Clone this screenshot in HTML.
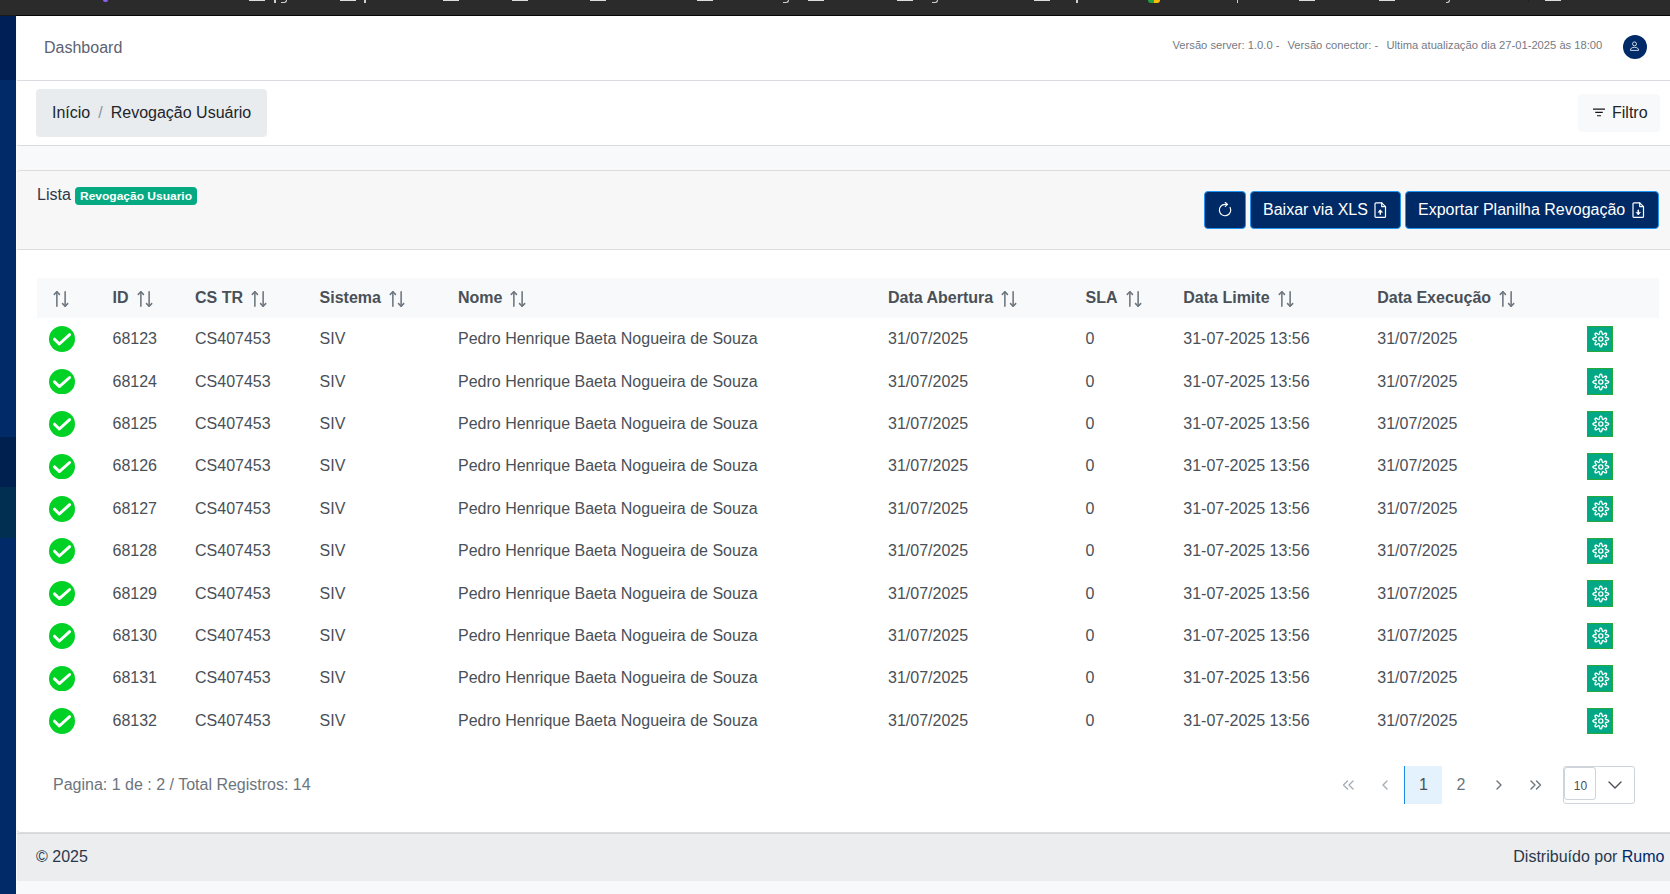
<!DOCTYPE html>
<html lang="pt-br">
<head>
<meta charset="utf-8">
<title>Revogação Usuário</title>
<style>
*{box-sizing:border-box;margin:0;padding:0}
html,body{width:1670px;height:894px;overflow:hidden}
body{position:relative;background:#f8f9fa;font-family:"Liberation Sans",sans-serif;font-size:16px;color:#495057}
.abs{position:absolute}
#topbar{left:0;top:0;width:1670px;height:16px;background:#2b2b2b;border-bottom:1px solid #060606}
#topbar i{position:absolute;top:0;height:1px;background:#dcdcdc;display:block}
#side{left:0;top:15px;width:16px;height:879px;background:#002a68;border-top:1px solid #1b1a18}
#side .s1{left:0;top:0;width:16px;height:64px;background:#001f57}
#side .s2{left:0;top:421px;width:16px;height:50px;background:#002050}
#side .s3{left:0;top:471px;width:16px;height:51px;background:#002f52}
#header{left:16px;top:16px;width:1654px;height:65px;background:#fff;border-bottom:1px solid #d8dbe0}
#dash{left:28px;top:23px;font-size:16px;line-height:18px;color:#5b6272}
#ver span{position:absolute;top:22.5px;font-size:11.2px;line-height:13px;color:#747a84;white-space:pre}
#avatar{left:1607px;top:19px;width:24px;height:24px;border-radius:50%;background:#002a68}
#sub{left:16px;top:81px;width:1654px;height:65px;background:#fff;border-bottom:1px solid #d8dbe0}
#crumb{left:20px;top:8px;width:231px;height:48px;background:#e9ecef;border-radius:4px;font-size:16px;line-height:47px;padding-left:16px;color:#212529;white-space:pre}
#crumb .sl{color:#8a93a2;padding:0 8px}
#filtro{left:1562px;top:13px;width:82px;height:38px;background:#f8f9fa;border-radius:4px;font-size:16px;line-height:38px;color:#212529}
#card{left:16px;top:170px;width:1660px;height:663px;background:#fff;border:1px solid #dcdcdd;border-radius:4px}
#chead{left:0;top:0;width:1658px;height:79px;background:#f7f7f7;border-bottom:1px solid #dcdcdd;border-radius:3px 3px 0 0}
#lista{left:37px;top:186px;font-size:16px;line-height:18px;color:#2c384a}
#badge span{display:inline-block;transform:scaleY(.89);transform-origin:0 13px}
#badge{left:75px;top:187px;width:122px;height:18px;background:#05aa83;border-radius:4px;color:#fff;font-weight:bold;font-size:12px;line-height:18px;text-align:center}
.btn{position:absolute;top:191px;height:38px;background:#002a66;border:1px solid #2196f3;border-radius:4px;color:#fff;font-size:16px;line-height:36px;white-space:nowrap}
#thead{left:37px;top:278px;width:1622px;height:40px;background:#f8f9fa}
.th{position:absolute;top:278px;height:40px;display:flex;align-items:center;font-weight:bold;font-size:16px;color:#495057;white-space:nowrap}
.th span{margin-right:8px}
.th svg{position:relative;top:1px}
.row{position:absolute;left:0;width:1670px;height:42.44px}
.td{position:absolute;top:0;height:42.44px;line-height:42.44px;font-size:16px;color:#495057;white-space:nowrap}
.chk{position:absolute;left:49px;width:26px;height:26px}
.gear{position:absolute;left:1587px;width:26px;height:26px;background:#00a886;border:1px solid #27a83a;display:flex;align-items:center;justify-content:center}
#pinfo{left:53px;top:776px;font-size:16px;line-height:18px;color:#6c757d}
.pg{position:absolute;top:766px;width:38px;height:38px;line-height:38px;text-align:center;font-size:16px;color:#6c757d}
#dd{left:1563px;top:766px;width:72px;height:38px;border:1px solid #ced4da;border-radius:3px;background:#fff}
#dd .in{left:0;top:0;width:32px;height:33px;padding-left:1px;border:1px solid #ced4da;border-radius:3px;font-size:12px;line-height:36px;text-align:center;color:#495057}
#footer{left:17px;top:833px;width:1653px;height:48px;background:#ebedef;border-top:1px solid #d5d7dc;font-size:16px;line-height:46px;color:#2c384a}
#wstrip{left:16px;top:16px;width:1px;height:878px;background:#fcfbfa}
</style>
</head>
<body>
<div id="topbar" class="abs"><i style="left:249px;width:16px"></i><i style="left:340px;width:16px"></i><i style="left:443px;width:16px"></i><i style="left:512px;width:16px"></i><i style="left:590px;width:16px"></i><i style="left:697px;width:16px"></i><i style="left:808px;width:16px"></i><i style="left:896.5px;width:16px"></i><i style="left:1034px;width:16px"></i><i style="left:1299px;width:16px"></i><i style="left:1379px;width:16px"></i><i style="left:1545px;width:16px"></i><i style="left:103px;width:5px;height:2px;background:#8f5cf0;border-radius:0 0 3px 3px"></i><i style="left:274.3px;width:1.6px;height:3px;background:#cfcfcf"></i><i style="left:364.3px;width:1.6px;height:3px;background:#cfcfcf"></i><i style="left:1076px;width:1.6px;height:3px;background:#cfcfcf"></i><i style="left:1236.6px;width:1.6px;height:3px;background:#cfcfcf"></i><i style="left:280.5px;width:6.5px;height:3px;background:none;border:1.300px solid #cfcfcf;border-top:none;border-left:none;border-radius:0 0 4px 0"></i><i style="left:782.5px;width:6.3px;height:3px;background:none;border:1.300px solid #cfcfcf;border-top:none;border-left:none;border-radius:0 0 4px 0"></i><i style="left:931.6px;width:6.3px;height:3px;background:none;border:1.300px solid #cfcfcf;border-top:none;border-left:none;border-radius:0 0 4px 0"></i><i style="left:1445.5px;width:4px;height:3px;background:none;border:1.200px solid #cfcfcf;border-top:none;border-left:none;border-radius:0 0 3px 0"></i><i style="left:1148px;width:12px;height:3px;background:linear-gradient(90deg,#1ea446 0 52%,#fbbc05 52%);border-radius:0 0 6px 6px"></i><i style="left:1528px;width:1px;height:2px;background:#222"></i></div>
<div id="side" class="abs"><div class="abs s1"></div><div class="abs s2"></div><div class="abs s3"></div></div>

<div id="header" class="abs">
  <div id="dash" class="abs">Dashboard</div>
  <div id="ver"><span style="left:1156.5px">Versão server: 1.0.0 -</span><span style="left:1271.5px">Versão conector: -</span><span style="left:1370.5px">Ultima atualização dia 27-01-2025 às 18:00</span></div>
  <div id="avatar" class="abs"><svg width="24" height="24" viewBox="0 0 24 24" fill="none" stroke="#fff" stroke-opacity=".88" stroke-width="0.9"><circle cx="11.5" cy="8.9" r="2"/><path d="M7.4 15.4c0-2 1.4-3.1 4.1-3.1s4.1 1.100 4.100 3.100z" stroke-linejoin="round"/></svg></div>
</div>

<div id="sub" class="abs">
  <div id="crumb" class="abs">Início<span class="sl">/</span>Revogação Usuário</div>
  <div id="filtro" class="abs"><svg class="abs" style="left:14px;top:13px" width="14" height="12" viewBox="0 0 14 12" fill="none" stroke="#161616" stroke-width="1.1"><path d="M1 2.100h12M3.200 5.400h7.600M5 8.700h4"/></svg><span class="abs" style="left:34px;top:0">Filtro</span></div>
</div>

<div id="card" class="abs"><div id="chead" class="abs"></div></div>
<div id="lista" class="abs">Lista</div>
<div id="badge" class="abs"><span>Revogação Usuario</span></div>

<div class="btn" style="left:1204px;width:42px"><svg class="abs" style="left:13px;top:10px" width="14" height="15" viewBox="0 0 14 15" fill="none" stroke="#fff" stroke-width="1.15" stroke-linecap="round" stroke-linejoin="round"><path d="M12.1 5.4A5.7 5.700 0 1 1 7 2.300L9.200 2.400"/><path d="M7.300 0.500L9.500 2.400L7.300 4.400"/></svg></div>
<div class="btn" style="left:1250px;width:151px"><span class="abs" style="left:12px;top:0">Baixar via XLS</span><svg class="abs" style="left:123px;top:10px" width="13" height="17" viewBox="0 0 13 17" fill="none" stroke="#fff" stroke-width="1.2" stroke-linejoin="round" stroke-linecap="round"><path d="M1 1.800a1 1 0 0 1 1-1h5.700l3.800 3.800v9.800a1 1 0 0 1-1 1h-8.500a1 1 0 0 1-1-1z"/><path d="M7.700 0.800v3.800h3.800"/><path d="M6.300 12.300V8.500" stroke-width="1.4"/><path d="M4.300 10.100L6.300 7.800l2 2.300z" fill="#fff" stroke-width=".6"/></svg></div>
<div class="btn" style="left:1405px;width:254px"><span class="abs" style="left:12px;top:0">Exportar Planilha Revogação</span><svg class="abs" style="left:226px;top:10px" width="13" height="17" viewBox="0 0 13 17" fill="none" stroke="#fff" stroke-width="1.2" stroke-linejoin="round" stroke-linecap="round"><path d="M1 1.800a1 1 0 0 1 1-1h5.700l3.800 3.800v9.800a1 1 0 0 1-1 1h-8.500a1 1 0 0 1-1-1z"/><path d="M7.700 0.800v3.800h3.800"/><path d="M6.300 8.300V12" stroke-width="1.4"/><path d="M4.300 10.600L6.300 12.900l2-2.300z" fill="#fff" stroke-width=".6"/></svg></div>

<div id="thead" class="abs"></div>
<div class="th" style="left:53px"><svg class="srt" width="16" height="16" viewBox="0 0 14 14" fill="#6c757d"><path d="M5.64515 3.61291C5.47353 3.61291 5.30192 3.54968 5.16644 3.4142L3.38708 1.63484L1.60773 3.4142C1.34579 3.67613 0.912244 3.67613 0.650309 3.4142C0.388374 3.15226 0.388374 2.71871 0.650309 2.45678L2.90837 0.198712C3.17031 -0.0632236 3.60386 -0.0632236 3.86579 0.198712L6.12386 2.45678C6.38579 2.71871 6.38579 3.15226 6.12386 3.4142C5.98837 3.54968 5.81676 3.61291 5.64515 3.61291Z"/><path d="M3.38714 14C3.01681 14 2.70972 13.6929 2.70972 13.3226V0.677419C2.70972 0.307097 3.01681 0 3.38714 0C3.75746 0 4.06456 0.307097 4.06456 0.677419V13.3226C4.06456 13.6929 3.75746 14 3.38714 14Z"/><path d="M10.6129 14C10.4413 14 10.2697 13.9368 10.1342 13.8013L7.87611 11.5432C7.61418 11.2813 7.61418 10.8477 7.87611 10.5858C8.13805 10.3239 8.5716 10.3239 8.83353 10.5858L10.6129 12.3652L12.3922 10.5858C12.6542 10.3239 13.0877 10.3239 13.3497 10.5858C13.6116 10.8477 13.6116 11.2813 13.3497 11.5432L11.0916 13.8013C10.9561 13.9368 10.7845 14 10.6129 14Z"/><path d="M10.6129 14C10.2426 14 9.93552 13.6929 9.93552 13.3226V0.677419C9.93552 0.307097 10.2426 0 10.6129 0C10.9833 0 11.2904 0.307097 11.2904 0.677419V13.3226C11.2904 13.6929 10.9832 14 10.6129 14Z"/></svg></div><div class="th" style="left:112.5px"><span>ID</span><svg class="srt" width="16" height="16" viewBox="0 0 14 14" fill="#6c757d"><path d="M5.64515 3.61291C5.47353 3.61291 5.30192 3.54968 5.16644 3.4142L3.38708 1.63484L1.60773 3.4142C1.34579 3.67613 0.912244 3.67613 0.650309 3.4142C0.388374 3.15226 0.388374 2.71871 0.650309 2.45678L2.90837 0.198712C3.17031 -0.0632236 3.60386 -0.0632236 3.86579 0.198712L6.12386 2.45678C6.38579 2.71871 6.38579 3.15226 6.12386 3.4142C5.98837 3.54968 5.81676 3.61291 5.64515 3.61291Z"/><path d="M3.38714 14C3.01681 14 2.70972 13.6929 2.70972 13.3226V0.677419C2.70972 0.307097 3.01681 0 3.38714 0C3.75746 0 4.06456 0.307097 4.06456 0.677419V13.3226C4.06456 13.6929 3.75746 14 3.38714 14Z"/><path d="M10.6129 14C10.4413 14 10.2697 13.9368 10.1342 13.8013L7.87611 11.5432C7.61418 11.2813 7.61418 10.8477 7.87611 10.5858C8.13805 10.3239 8.5716 10.3239 8.83353 10.5858L10.6129 12.3652L12.3922 10.5858C12.6542 10.3239 13.0877 10.3239 13.3497 10.5858C13.6116 10.8477 13.6116 11.2813 13.3497 11.5432L11.0916 13.8013C10.9561 13.9368 10.7845 14 10.6129 14Z"/><path d="M10.6129 14C10.2426 14 9.93552 13.6929 9.93552 13.3226V0.677419C9.93552 0.307097 10.2426 0 10.6129 0C10.9833 0 11.2904 0.307097 11.2904 0.677419V13.3226C11.2904 13.6929 10.9832 14 10.6129 14Z"/></svg></div><div class="th" style="left:195px"><span>CS TR</span><svg class="srt" width="16" height="16" viewBox="0 0 14 14" fill="#6c757d"><path d="M5.64515 3.61291C5.47353 3.61291 5.30192 3.54968 5.16644 3.4142L3.38708 1.63484L1.60773 3.4142C1.34579 3.67613 0.912244 3.67613 0.650309 3.4142C0.388374 3.15226 0.388374 2.71871 0.650309 2.45678L2.90837 0.198712C3.17031 -0.0632236 3.60386 -0.0632236 3.86579 0.198712L6.12386 2.45678C6.38579 2.71871 6.38579 3.15226 6.12386 3.4142C5.98837 3.54968 5.81676 3.61291 5.64515 3.61291Z"/><path d="M3.38714 14C3.01681 14 2.70972 13.6929 2.70972 13.3226V0.677419C2.70972 0.307097 3.01681 0 3.38714 0C3.75746 0 4.06456 0.307097 4.06456 0.677419V13.3226C4.06456 13.6929 3.75746 14 3.38714 14Z"/><path d="M10.6129 14C10.4413 14 10.2697 13.9368 10.1342 13.8013L7.87611 11.5432C7.61418 11.2813 7.61418 10.8477 7.87611 10.5858C8.13805 10.3239 8.5716 10.3239 8.83353 10.5858L10.6129 12.3652L12.3922 10.5858C12.6542 10.3239 13.0877 10.3239 13.3497 10.5858C13.6116 10.8477 13.6116 11.2813 13.3497 11.5432L11.0916 13.8013C10.9561 13.9368 10.7845 14 10.6129 14Z"/><path d="M10.6129 14C10.2426 14 9.93552 13.6929 9.93552 13.3226V0.677419C9.93552 0.307097 10.2426 0 10.6129 0C10.9833 0 11.2904 0.307097 11.2904 0.677419V13.3226C11.2904 13.6929 10.9832 14 10.6129 14Z"/></svg></div><div class="th" style="left:319.6px"><span>Sistema</span><svg class="srt" width="16" height="16" viewBox="0 0 14 14" fill="#6c757d"><path d="M5.64515 3.61291C5.47353 3.61291 5.30192 3.54968 5.16644 3.4142L3.38708 1.63484L1.60773 3.4142C1.34579 3.67613 0.912244 3.67613 0.650309 3.4142C0.388374 3.15226 0.388374 2.71871 0.650309 2.45678L2.90837 0.198712C3.17031 -0.0632236 3.60386 -0.0632236 3.86579 0.198712L6.12386 2.45678C6.38579 2.71871 6.38579 3.15226 6.12386 3.4142C5.98837 3.54968 5.81676 3.61291 5.64515 3.61291Z"/><path d="M3.38714 14C3.01681 14 2.70972 13.6929 2.70972 13.3226V0.677419C2.70972 0.307097 3.01681 0 3.38714 0C3.75746 0 4.06456 0.307097 4.06456 0.677419V13.3226C4.06456 13.6929 3.75746 14 3.38714 14Z"/><path d="M10.6129 14C10.4413 14 10.2697 13.9368 10.1342 13.8013L7.87611 11.5432C7.61418 11.2813 7.61418 10.8477 7.87611 10.5858C8.13805 10.3239 8.5716 10.3239 8.83353 10.5858L10.6129 12.3652L12.3922 10.5858C12.6542 10.3239 13.0877 10.3239 13.3497 10.5858C13.6116 10.8477 13.6116 11.2813 13.3497 11.5432L11.0916 13.8013C10.9561 13.9368 10.7845 14 10.6129 14Z"/><path d="M10.6129 14C10.2426 14 9.93552 13.6929 9.93552 13.3226V0.677419C9.93552 0.307097 10.2426 0 10.6129 0C10.9833 0 11.2904 0.307097 11.2904 0.677419V13.3226C11.2904 13.6929 10.9832 14 10.6129 14Z"/></svg></div><div class="th" style="left:458px"><span>Nome</span><svg class="srt" width="16" height="16" viewBox="0 0 14 14" fill="#6c757d"><path d="M5.64515 3.61291C5.47353 3.61291 5.30192 3.54968 5.16644 3.4142L3.38708 1.63484L1.60773 3.4142C1.34579 3.67613 0.912244 3.67613 0.650309 3.4142C0.388374 3.15226 0.388374 2.71871 0.650309 2.45678L2.90837 0.198712C3.17031 -0.0632236 3.60386 -0.0632236 3.86579 0.198712L6.12386 2.45678C6.38579 2.71871 6.38579 3.15226 6.12386 3.4142C5.98837 3.54968 5.81676 3.61291 5.64515 3.61291Z"/><path d="M3.38714 14C3.01681 14 2.70972 13.6929 2.70972 13.3226V0.677419C2.70972 0.307097 3.01681 0 3.38714 0C3.75746 0 4.06456 0.307097 4.06456 0.677419V13.3226C4.06456 13.6929 3.75746 14 3.38714 14Z"/><path d="M10.6129 14C10.4413 14 10.2697 13.9368 10.1342 13.8013L7.87611 11.5432C7.61418 11.2813 7.61418 10.8477 7.87611 10.5858C8.13805 10.3239 8.5716 10.3239 8.83353 10.5858L10.6129 12.3652L12.3922 10.5858C12.6542 10.3239 13.0877 10.3239 13.3497 10.5858C13.6116 10.8477 13.6116 11.2813 13.3497 11.5432L11.0916 13.8013C10.9561 13.9368 10.7845 14 10.6129 14Z"/><path d="M10.6129 14C10.2426 14 9.93552 13.6929 9.93552 13.3226V0.677419C9.93552 0.307097 10.2426 0 10.6129 0C10.9833 0 11.2904 0.307097 11.2904 0.677419V13.3226C11.2904 13.6929 10.9832 14 10.6129 14Z"/></svg></div><div class="th" style="left:888px"><span>Data Abertura</span><svg class="srt" width="16" height="16" viewBox="0 0 14 14" fill="#6c757d"><path d="M5.64515 3.61291C5.47353 3.61291 5.30192 3.54968 5.16644 3.4142L3.38708 1.63484L1.60773 3.4142C1.34579 3.67613 0.912244 3.67613 0.650309 3.4142C0.388374 3.15226 0.388374 2.71871 0.650309 2.45678L2.90837 0.198712C3.17031 -0.0632236 3.60386 -0.0632236 3.86579 0.198712L6.12386 2.45678C6.38579 2.71871 6.38579 3.15226 6.12386 3.4142C5.98837 3.54968 5.81676 3.61291 5.64515 3.61291Z"/><path d="M3.38714 14C3.01681 14 2.70972 13.6929 2.70972 13.3226V0.677419C2.70972 0.307097 3.01681 0 3.38714 0C3.75746 0 4.06456 0.307097 4.06456 0.677419V13.3226C4.06456 13.6929 3.75746 14 3.38714 14Z"/><path d="M10.6129 14C10.4413 14 10.2697 13.9368 10.1342 13.8013L7.87611 11.5432C7.61418 11.2813 7.61418 10.8477 7.87611 10.5858C8.13805 10.3239 8.5716 10.3239 8.83353 10.5858L10.6129 12.3652L12.3922 10.5858C12.6542 10.3239 13.0877 10.3239 13.3497 10.5858C13.6116 10.8477 13.6116 11.2813 13.3497 11.5432L11.0916 13.8013C10.9561 13.9368 10.7845 14 10.6129 14Z"/><path d="M10.6129 14C10.2426 14 9.93552 13.6929 9.93552 13.3226V0.677419C9.93552 0.307097 10.2426 0 10.6129 0C10.9833 0 11.2904 0.307097 11.2904 0.677419V13.3226C11.2904 13.6929 10.9832 14 10.6129 14Z"/></svg></div><div class="th" style="left:1085.5px"><span>SLA</span><svg class="srt" width="16" height="16" viewBox="0 0 14 14" fill="#6c757d"><path d="M5.64515 3.61291C5.47353 3.61291 5.30192 3.54968 5.16644 3.4142L3.38708 1.63484L1.60773 3.4142C1.34579 3.67613 0.912244 3.67613 0.650309 3.4142C0.388374 3.15226 0.388374 2.71871 0.650309 2.45678L2.90837 0.198712C3.17031 -0.0632236 3.60386 -0.0632236 3.86579 0.198712L6.12386 2.45678C6.38579 2.71871 6.38579 3.15226 6.12386 3.4142C5.98837 3.54968 5.81676 3.61291 5.64515 3.61291Z"/><path d="M3.38714 14C3.01681 14 2.70972 13.6929 2.70972 13.3226V0.677419C2.70972 0.307097 3.01681 0 3.38714 0C3.75746 0 4.06456 0.307097 4.06456 0.677419V13.3226C4.06456 13.6929 3.75746 14 3.38714 14Z"/><path d="M10.6129 14C10.4413 14 10.2697 13.9368 10.1342 13.8013L7.87611 11.5432C7.61418 11.2813 7.61418 10.8477 7.87611 10.5858C8.13805 10.3239 8.5716 10.3239 8.83353 10.5858L10.6129 12.3652L12.3922 10.5858C12.6542 10.3239 13.0877 10.3239 13.3497 10.5858C13.6116 10.8477 13.6116 11.2813 13.3497 11.5432L11.0916 13.8013C10.9561 13.9368 10.7845 14 10.6129 14Z"/><path d="M10.6129 14C10.2426 14 9.93552 13.6929 9.93552 13.3226V0.677419C9.93552 0.307097 10.2426 0 10.6129 0C10.9833 0 11.2904 0.307097 11.2904 0.677419V13.3226C11.2904 13.6929 10.9832 14 10.6129 14Z"/></svg></div><div class="th" style="left:1183.3px"><span>Data Limite</span><svg class="srt" width="16" height="16" viewBox="0 0 14 14" fill="#6c757d"><path d="M5.64515 3.61291C5.47353 3.61291 5.30192 3.54968 5.16644 3.4142L3.38708 1.63484L1.60773 3.4142C1.34579 3.67613 0.912244 3.67613 0.650309 3.4142C0.388374 3.15226 0.388374 2.71871 0.650309 2.45678L2.90837 0.198712C3.17031 -0.0632236 3.60386 -0.0632236 3.86579 0.198712L6.12386 2.45678C6.38579 2.71871 6.38579 3.15226 6.12386 3.4142C5.98837 3.54968 5.81676 3.61291 5.64515 3.61291Z"/><path d="M3.38714 14C3.01681 14 2.70972 13.6929 2.70972 13.3226V0.677419C2.70972 0.307097 3.01681 0 3.38714 0C3.75746 0 4.06456 0.307097 4.06456 0.677419V13.3226C4.06456 13.6929 3.75746 14 3.38714 14Z"/><path d="M10.6129 14C10.4413 14 10.2697 13.9368 10.1342 13.8013L7.87611 11.5432C7.61418 11.2813 7.61418 10.8477 7.87611 10.5858C8.13805 10.3239 8.5716 10.3239 8.83353 10.5858L10.6129 12.3652L12.3922 10.5858C12.6542 10.3239 13.0877 10.3239 13.3497 10.5858C13.6116 10.8477 13.6116 11.2813 13.3497 11.5432L11.0916 13.8013C10.9561 13.9368 10.7845 14 10.6129 14Z"/><path d="M10.6129 14C10.2426 14 9.93552 13.6929 9.93552 13.3226V0.677419C9.93552 0.307097 10.2426 0 10.6129 0C10.9833 0 11.2904 0.307097 11.2904 0.677419V13.3226C11.2904 13.6929 10.9832 14 10.6129 14Z"/></svg></div><div class="th" style="left:1377.3px"><span>Data Execução</span><svg class="srt" width="16" height="16" viewBox="0 0 14 14" fill="#6c757d"><path d="M5.64515 3.61291C5.47353 3.61291 5.30192 3.54968 5.16644 3.4142L3.38708 1.63484L1.60773 3.4142C1.34579 3.67613 0.912244 3.67613 0.650309 3.4142C0.388374 3.15226 0.388374 2.71871 0.650309 2.45678L2.90837 0.198712C3.17031 -0.0632236 3.60386 -0.0632236 3.86579 0.198712L6.12386 2.45678C6.38579 2.71871 6.38579 3.15226 6.12386 3.4142C5.98837 3.54968 5.81676 3.61291 5.64515 3.61291Z"/><path d="M3.38714 14C3.01681 14 2.70972 13.6929 2.70972 13.3226V0.677419C2.70972 0.307097 3.01681 0 3.38714 0C3.75746 0 4.06456 0.307097 4.06456 0.677419V13.3226C4.06456 13.6929 3.75746 14 3.38714 14Z"/><path d="M10.6129 14C10.4413 14 10.2697 13.9368 10.1342 13.8013L7.87611 11.5432C7.61418 11.2813 7.61418 10.8477 7.87611 10.5858C8.13805 10.3239 8.5716 10.3239 8.83353 10.5858L10.6129 12.3652L12.3922 10.5858C12.6542 10.3239 13.0877 10.3239 13.3497 10.5858C13.6116 10.8477 13.6116 11.2813 13.3497 11.5432L11.0916 13.8013C10.9561 13.9368 10.7845 14 10.6129 14Z"/><path d="M10.6129 14C10.2426 14 9.93552 13.6929 9.93552 13.3226V0.677419C9.93552 0.307097 10.2426 0 10.6129 0C10.9833 0 11.2904 0.307097 11.2904 0.677419V13.3226C11.2904 13.6929 10.9832 14 10.6129 14Z"/></svg></div>
<div class="chk" style="top:326.00px"><svg width="26" height="26" viewBox="0 0 26 26" preserveAspectRatio="none"><circle cx="13" cy="13" r="13" fill="#00d125"/><path d="M5.5 13.2 L10.3 18 L20.6 8.700" fill="none" stroke="#fff" stroke-width="3" stroke-linecap="round" stroke-linejoin="round"/></svg></div><div class="row" style="top:318px"><div class="td" style="left:112.5px">68123</div><div class="td" style="left:195px">CS407453</div><div class="td" style="left:319.6px">SIV</div><div class="td" style="left:458px">Pedro Henrique Baeta Nogueira de Souza</div><div class="td" style="left:888px">31/07/2025</div><div class="td" style="left:1085.5px">0</div><div class="td" style="left:1183.3px">31-07-2025 13:56</div><div class="td" style="left:1377.3px">31/07/2025</div></div><div class="gear" style="top:326px;height:26px"><svg width="16" height="16" viewBox="0 0 16 16" fill="none" stroke="#fff" stroke-width="1.3" stroke-linejoin="round" style="overflow:visible"><path d="M16.70 8.00 L16.63 8.31 L16.42 8.60 L16.08 8.86 L15.64 9.08 L15.08 9.25 L14.52 9.37 L14.06 9.48 L13.71 9.59 L13.46 9.72 L13.33 9.88 L13.31 10.08 L13.40 10.34 L13.57 10.67 L13.81 11.07 L14.12 11.56 L14.40 12.07 L14.56 12.54 L14.61 12.96 L14.55 13.32 L14.39 13.59 L14.12 13.75 L13.76 13.81 L13.34 13.76 L12.87 13.60 L12.36 13.32 L11.87 13.01 L11.47 12.77 L11.14 12.60 L10.88 12.51 L10.68 12.53 L10.52 12.66 L10.39 12.91 L10.28 13.26 L10.17 13.72 L10.05 14.28 L9.88 14.84 L9.66 15.28 L9.40 15.62 L9.11 15.83 L8.80 15.90 L8.49 15.83 L8.20 15.62 L7.94 15.28 L7.72 14.84 L7.55 14.28 L7.43 13.72 L7.32 13.26 L7.21 12.91 L7.08 12.66 L6.92 12.53 L6.72 12.51 L6.46 12.60 L6.13 12.77 L5.73 13.01 L5.24 13.32 L4.73 13.60 L4.26 13.76 L3.84 13.81 L3.48 13.75 L3.21 13.59 L3.05 13.32 L2.99 12.96 L3.04 12.54 L3.20 12.07 L3.48 11.56 L3.79 11.07 L4.03 10.67 L4.20 10.34 L4.29 10.08 L4.27 9.88 L4.14 9.72 L3.89 9.59 L3.54 9.48 L3.08 9.37 L2.52 9.25 L1.96 9.08 L1.52 8.86 L1.18 8.60 L0.97 8.31 L0.90 8.00 L0.97 7.69 L1.18 7.40 L1.52 7.14 L1.96 6.92 L2.52 6.75 L3.08 6.63 L3.54 6.52 L3.89 6.41 L4.14 6.28 L4.27 6.12 L4.29 5.92 L4.20 5.66 L4.03 5.33 L3.79 4.93 L3.48 4.44 L3.20 3.93 L3.04 3.46 L2.99 3.04 L3.05 2.68 L3.21 2.41 L3.48 2.25 L3.84 2.19 L4.26 2.24 L4.73 2.40 L5.24 2.68 L5.73 2.99 L6.13 3.23 L6.46 3.40 L6.72 3.49 L6.92 3.47 L7.08 3.34 L7.21 3.09 L7.32 2.74 L7.43 2.28 L7.55 1.72 L7.72 1.16 L7.94 0.72 L8.20 0.38 L8.49 0.17 L8.80 0.10 L9.11 0.17 L9.40 0.38 L9.66 0.72 L9.88 1.16 L10.05 1.72 L10.17 2.28 L10.28 2.74 L10.39 3.09 L10.52 3.34 L10.68 3.47 L10.88 3.49 L11.14 3.40 L11.47 3.23 L11.87 2.99 L12.36 2.68 L12.87 2.40 L13.34 2.24 L13.76 2.19 L14.12 2.25 L14.39 2.41 L14.55 2.68 L14.61 3.04 L14.56 3.46 L14.40 3.93 L14.12 4.44 L13.81 4.93 L13.57 5.33 L13.40 5.66 L13.31 5.92 L13.33 6.12 L13.46 6.28 L13.71 6.41 L14.06 6.52 L14.52 6.63 L15.08 6.75 L15.64 6.92 L16.08 7.14 L16.42 7.40 L16.63 7.69Z"/><circle cx="8.8" cy="8" r="2.1"/></svg></div><div class="chk" style="top:368.75px"><svg width="26" height="25.4" viewBox="0 0 26 26" preserveAspectRatio="none"><circle cx="13" cy="13" r="13" fill="#00d125"/><path d="M5.5 13.2 L10.3 18 L20.6 8.700" fill="none" stroke="#fff" stroke-width="3" stroke-linecap="round" stroke-linejoin="round"/></svg></div><div class="row" style="top:361px"><div class="td" style="left:112.5px">68124</div><div class="td" style="left:195px">CS407453</div><div class="td" style="left:319.6px">SIV</div><div class="td" style="left:458px">Pedro Henrique Baeta Nogueira de Souza</div><div class="td" style="left:888px">31/07/2025</div><div class="td" style="left:1085.5px">0</div><div class="td" style="left:1183.3px">31-07-2025 13:56</div><div class="td" style="left:1377.3px">31/07/2025</div></div><div class="gear" style="top:368px;height:27px"><svg width="16" height="16" viewBox="0 0 16 16" fill="none" stroke="#fff" stroke-width="1.3" stroke-linejoin="round" style="overflow:visible"><path d="M16.70 8.00 L16.63 8.31 L16.42 8.60 L16.08 8.86 L15.64 9.08 L15.08 9.25 L14.52 9.37 L14.06 9.48 L13.71 9.59 L13.46 9.72 L13.33 9.88 L13.31 10.08 L13.40 10.34 L13.57 10.67 L13.81 11.07 L14.12 11.56 L14.40 12.07 L14.56 12.54 L14.61 12.96 L14.55 13.32 L14.39 13.59 L14.12 13.75 L13.76 13.81 L13.34 13.76 L12.87 13.60 L12.36 13.32 L11.87 13.01 L11.47 12.77 L11.14 12.60 L10.88 12.51 L10.68 12.53 L10.52 12.66 L10.39 12.91 L10.28 13.26 L10.17 13.72 L10.05 14.28 L9.88 14.84 L9.66 15.28 L9.40 15.62 L9.11 15.83 L8.80 15.90 L8.49 15.83 L8.20 15.62 L7.94 15.28 L7.72 14.84 L7.55 14.28 L7.43 13.72 L7.32 13.26 L7.21 12.91 L7.08 12.66 L6.92 12.53 L6.72 12.51 L6.46 12.60 L6.13 12.77 L5.73 13.01 L5.24 13.32 L4.73 13.60 L4.26 13.76 L3.84 13.81 L3.48 13.75 L3.21 13.59 L3.05 13.32 L2.99 12.96 L3.04 12.54 L3.20 12.07 L3.48 11.56 L3.79 11.07 L4.03 10.67 L4.20 10.34 L4.29 10.08 L4.27 9.88 L4.14 9.72 L3.89 9.59 L3.54 9.48 L3.08 9.37 L2.52 9.25 L1.96 9.08 L1.52 8.86 L1.18 8.60 L0.97 8.31 L0.90 8.00 L0.97 7.69 L1.18 7.40 L1.52 7.14 L1.96 6.92 L2.52 6.75 L3.08 6.63 L3.54 6.52 L3.89 6.41 L4.14 6.28 L4.27 6.12 L4.29 5.92 L4.20 5.66 L4.03 5.33 L3.79 4.93 L3.48 4.44 L3.20 3.93 L3.04 3.46 L2.99 3.04 L3.05 2.68 L3.21 2.41 L3.48 2.25 L3.84 2.19 L4.26 2.24 L4.73 2.40 L5.24 2.68 L5.73 2.99 L6.13 3.23 L6.46 3.40 L6.72 3.49 L6.92 3.47 L7.08 3.34 L7.21 3.09 L7.32 2.74 L7.43 2.28 L7.55 1.72 L7.72 1.16 L7.94 0.72 L8.20 0.38 L8.49 0.17 L8.80 0.10 L9.11 0.17 L9.40 0.38 L9.66 0.72 L9.88 1.16 L10.05 1.72 L10.17 2.28 L10.28 2.74 L10.39 3.09 L10.52 3.34 L10.68 3.47 L10.88 3.49 L11.14 3.40 L11.47 3.23 L11.87 2.99 L12.36 2.68 L12.87 2.40 L13.34 2.24 L13.76 2.19 L14.12 2.25 L14.39 2.41 L14.55 2.68 L14.61 3.04 L14.56 3.46 L14.40 3.93 L14.12 4.44 L13.81 4.93 L13.57 5.33 L13.40 5.66 L13.31 5.92 L13.33 6.12 L13.46 6.28 L13.71 6.41 L14.06 6.52 L14.52 6.63 L15.08 6.75 L15.64 6.92 L16.08 7.14 L16.42 7.40 L16.63 7.69Z"/><circle cx="8.8" cy="8" r="2.1"/></svg></div><div class="chk" style="top:410.80px"><svg width="26" height="26" viewBox="0 0 26 26" preserveAspectRatio="none"><circle cx="13" cy="13" r="13" fill="#00d125"/><path d="M5.5 13.2 L10.3 18 L20.6 8.700" fill="none" stroke="#fff" stroke-width="3" stroke-linecap="round" stroke-linejoin="round"/></svg></div><div class="row" style="top:403px"><div class="td" style="left:112.5px">68125</div><div class="td" style="left:195px">CS407453</div><div class="td" style="left:319.6px">SIV</div><div class="td" style="left:458px">Pedro Henrique Baeta Nogueira de Souza</div><div class="td" style="left:888px">31/07/2025</div><div class="td" style="left:1085.5px">0</div><div class="td" style="left:1183.3px">31-07-2025 13:56</div><div class="td" style="left:1377.3px">31/07/2025</div></div><div class="gear" style="top:411px;height:26px"><svg width="16" height="16" viewBox="0 0 16 16" fill="none" stroke="#fff" stroke-width="1.3" stroke-linejoin="round" style="overflow:visible"><path d="M16.70 8.00 L16.63 8.31 L16.42 8.60 L16.08 8.86 L15.64 9.08 L15.08 9.25 L14.52 9.37 L14.06 9.48 L13.71 9.59 L13.46 9.72 L13.33 9.88 L13.31 10.08 L13.40 10.34 L13.57 10.67 L13.81 11.07 L14.12 11.56 L14.40 12.07 L14.56 12.54 L14.61 12.96 L14.55 13.32 L14.39 13.59 L14.12 13.75 L13.76 13.81 L13.34 13.76 L12.87 13.60 L12.36 13.32 L11.87 13.01 L11.47 12.77 L11.14 12.60 L10.88 12.51 L10.68 12.53 L10.52 12.66 L10.39 12.91 L10.28 13.26 L10.17 13.72 L10.05 14.28 L9.88 14.84 L9.66 15.28 L9.40 15.62 L9.11 15.83 L8.80 15.90 L8.49 15.83 L8.20 15.62 L7.94 15.28 L7.72 14.84 L7.55 14.28 L7.43 13.72 L7.32 13.26 L7.21 12.91 L7.08 12.66 L6.92 12.53 L6.72 12.51 L6.46 12.60 L6.13 12.77 L5.73 13.01 L5.24 13.32 L4.73 13.60 L4.26 13.76 L3.84 13.81 L3.48 13.75 L3.21 13.59 L3.05 13.32 L2.99 12.96 L3.04 12.54 L3.20 12.07 L3.48 11.56 L3.79 11.07 L4.03 10.67 L4.20 10.34 L4.29 10.08 L4.27 9.88 L4.14 9.72 L3.89 9.59 L3.54 9.48 L3.08 9.37 L2.52 9.25 L1.96 9.08 L1.52 8.86 L1.18 8.60 L0.97 8.31 L0.90 8.00 L0.97 7.69 L1.18 7.40 L1.52 7.14 L1.96 6.92 L2.52 6.75 L3.08 6.63 L3.54 6.52 L3.89 6.41 L4.14 6.28 L4.27 6.12 L4.29 5.92 L4.20 5.66 L4.03 5.33 L3.79 4.93 L3.48 4.44 L3.20 3.93 L3.04 3.46 L2.99 3.04 L3.05 2.68 L3.21 2.41 L3.48 2.25 L3.84 2.19 L4.26 2.24 L4.73 2.40 L5.24 2.68 L5.73 2.99 L6.13 3.23 L6.46 3.40 L6.72 3.49 L6.92 3.47 L7.08 3.34 L7.21 3.09 L7.32 2.74 L7.43 2.28 L7.55 1.72 L7.72 1.16 L7.94 0.72 L8.20 0.38 L8.49 0.17 L8.80 0.10 L9.11 0.17 L9.40 0.38 L9.66 0.72 L9.88 1.16 L10.05 1.72 L10.17 2.28 L10.28 2.74 L10.39 3.09 L10.52 3.34 L10.68 3.47 L10.88 3.49 L11.14 3.40 L11.47 3.23 L11.87 2.99 L12.36 2.68 L12.87 2.40 L13.34 2.24 L13.76 2.19 L14.12 2.25 L14.39 2.41 L14.55 2.68 L14.61 3.04 L14.56 3.46 L14.40 3.93 L14.12 4.44 L13.81 4.93 L13.57 5.33 L13.40 5.66 L13.31 5.92 L13.33 6.12 L13.46 6.28 L13.71 6.41 L14.06 6.52 L14.52 6.63 L15.08 6.75 L15.64 6.92 L16.08 7.14 L16.42 7.40 L16.63 7.69Z"/><circle cx="8.8" cy="8" r="2.1"/></svg></div><div class="chk" style="top:453.55px"><svg width="26" height="25.4" viewBox="0 0 26 26" preserveAspectRatio="none"><circle cx="13" cy="13" r="13" fill="#00d125"/><path d="M5.5 13.2 L10.3 18 L20.6 8.700" fill="none" stroke="#fff" stroke-width="3" stroke-linecap="round" stroke-linejoin="round"/></svg></div><div class="row" style="top:445px"><div class="td" style="left:112.5px">68126</div><div class="td" style="left:195px">CS407453</div><div class="td" style="left:319.6px">SIV</div><div class="td" style="left:458px">Pedro Henrique Baeta Nogueira de Souza</div><div class="td" style="left:888px">31/07/2025</div><div class="td" style="left:1085.5px">0</div><div class="td" style="left:1183.3px">31-07-2025 13:56</div><div class="td" style="left:1377.3px">31/07/2025</div></div><div class="gear" style="top:453px;height:27px"><svg width="16" height="16" viewBox="0 0 16 16" fill="none" stroke="#fff" stroke-width="1.3" stroke-linejoin="round" style="overflow:visible"><path d="M16.70 8.00 L16.63 8.31 L16.42 8.60 L16.08 8.86 L15.64 9.08 L15.08 9.25 L14.52 9.37 L14.06 9.48 L13.71 9.59 L13.46 9.72 L13.33 9.88 L13.31 10.08 L13.40 10.34 L13.57 10.67 L13.81 11.07 L14.12 11.56 L14.40 12.07 L14.56 12.54 L14.61 12.96 L14.55 13.32 L14.39 13.59 L14.12 13.75 L13.76 13.81 L13.34 13.76 L12.87 13.60 L12.36 13.32 L11.87 13.01 L11.47 12.77 L11.14 12.60 L10.88 12.51 L10.68 12.53 L10.52 12.66 L10.39 12.91 L10.28 13.26 L10.17 13.72 L10.05 14.28 L9.88 14.84 L9.66 15.28 L9.40 15.62 L9.11 15.83 L8.80 15.90 L8.49 15.83 L8.20 15.62 L7.94 15.28 L7.72 14.84 L7.55 14.28 L7.43 13.72 L7.32 13.26 L7.21 12.91 L7.08 12.66 L6.92 12.53 L6.72 12.51 L6.46 12.60 L6.13 12.77 L5.73 13.01 L5.24 13.32 L4.73 13.60 L4.26 13.76 L3.84 13.81 L3.48 13.75 L3.21 13.59 L3.05 13.32 L2.99 12.96 L3.04 12.54 L3.20 12.07 L3.48 11.56 L3.79 11.07 L4.03 10.67 L4.20 10.34 L4.29 10.08 L4.27 9.88 L4.14 9.72 L3.89 9.59 L3.54 9.48 L3.08 9.37 L2.52 9.25 L1.96 9.08 L1.52 8.86 L1.18 8.60 L0.97 8.31 L0.90 8.00 L0.97 7.69 L1.18 7.40 L1.52 7.14 L1.96 6.92 L2.52 6.75 L3.08 6.63 L3.54 6.52 L3.89 6.41 L4.14 6.28 L4.27 6.12 L4.29 5.92 L4.20 5.66 L4.03 5.33 L3.79 4.93 L3.48 4.44 L3.20 3.93 L3.04 3.46 L2.99 3.04 L3.05 2.68 L3.21 2.41 L3.48 2.25 L3.84 2.19 L4.26 2.24 L4.73 2.40 L5.24 2.68 L5.73 2.99 L6.13 3.23 L6.46 3.40 L6.72 3.49 L6.92 3.47 L7.08 3.34 L7.21 3.09 L7.32 2.74 L7.43 2.28 L7.55 1.72 L7.72 1.16 L7.94 0.72 L8.20 0.38 L8.49 0.17 L8.80 0.10 L9.11 0.17 L9.40 0.38 L9.66 0.72 L9.88 1.16 L10.05 1.72 L10.17 2.28 L10.28 2.74 L10.39 3.09 L10.52 3.34 L10.68 3.47 L10.88 3.49 L11.14 3.40 L11.47 3.23 L11.87 2.99 L12.36 2.68 L12.87 2.40 L13.34 2.24 L13.76 2.19 L14.12 2.25 L14.39 2.41 L14.55 2.68 L14.61 3.04 L14.56 3.46 L14.40 3.93 L14.12 4.44 L13.81 4.93 L13.57 5.33 L13.40 5.66 L13.31 5.92 L13.33 6.12 L13.46 6.28 L13.71 6.41 L14.06 6.52 L14.52 6.63 L15.08 6.75 L15.64 6.92 L16.08 7.14 L16.42 7.40 L16.63 7.69Z"/><circle cx="8.8" cy="8" r="2.1"/></svg></div><div class="chk" style="top:495.60px"><svg width="26" height="26" viewBox="0 0 26 26" preserveAspectRatio="none"><circle cx="13" cy="13" r="13" fill="#00d125"/><path d="M5.5 13.2 L10.3 18 L20.6 8.700" fill="none" stroke="#fff" stroke-width="3" stroke-linecap="round" stroke-linejoin="round"/></svg></div><div class="row" style="top:488px"><div class="td" style="left:112.5px">68127</div><div class="td" style="left:195px">CS407453</div><div class="td" style="left:319.6px">SIV</div><div class="td" style="left:458px">Pedro Henrique Baeta Nogueira de Souza</div><div class="td" style="left:888px">31/07/2025</div><div class="td" style="left:1085.5px">0</div><div class="td" style="left:1183.3px">31-07-2025 13:56</div><div class="td" style="left:1377.3px">31/07/2025</div></div><div class="gear" style="top:496px;height:26px"><svg width="16" height="16" viewBox="0 0 16 16" fill="none" stroke="#fff" stroke-width="1.3" stroke-linejoin="round" style="overflow:visible"><path d="M16.70 8.00 L16.63 8.31 L16.42 8.60 L16.08 8.86 L15.64 9.08 L15.08 9.25 L14.52 9.37 L14.06 9.48 L13.71 9.59 L13.46 9.72 L13.33 9.88 L13.31 10.08 L13.40 10.34 L13.57 10.67 L13.81 11.07 L14.12 11.56 L14.40 12.07 L14.56 12.54 L14.61 12.96 L14.55 13.32 L14.39 13.59 L14.12 13.75 L13.76 13.81 L13.34 13.76 L12.87 13.60 L12.36 13.32 L11.87 13.01 L11.47 12.77 L11.14 12.60 L10.88 12.51 L10.68 12.53 L10.52 12.66 L10.39 12.91 L10.28 13.26 L10.17 13.72 L10.05 14.28 L9.88 14.84 L9.66 15.28 L9.40 15.62 L9.11 15.83 L8.80 15.90 L8.49 15.83 L8.20 15.62 L7.94 15.28 L7.72 14.84 L7.55 14.28 L7.43 13.72 L7.32 13.26 L7.21 12.91 L7.08 12.66 L6.92 12.53 L6.72 12.51 L6.46 12.60 L6.13 12.77 L5.73 13.01 L5.24 13.32 L4.73 13.60 L4.26 13.76 L3.84 13.81 L3.48 13.75 L3.21 13.59 L3.05 13.32 L2.99 12.96 L3.04 12.54 L3.20 12.07 L3.48 11.56 L3.79 11.07 L4.03 10.67 L4.20 10.34 L4.29 10.08 L4.27 9.88 L4.14 9.72 L3.89 9.59 L3.54 9.48 L3.08 9.37 L2.52 9.25 L1.96 9.08 L1.52 8.86 L1.18 8.60 L0.97 8.31 L0.90 8.00 L0.97 7.69 L1.18 7.40 L1.52 7.14 L1.96 6.92 L2.52 6.75 L3.08 6.63 L3.54 6.52 L3.89 6.41 L4.14 6.28 L4.27 6.12 L4.29 5.92 L4.20 5.66 L4.03 5.33 L3.79 4.93 L3.48 4.44 L3.20 3.93 L3.04 3.46 L2.99 3.04 L3.05 2.68 L3.21 2.41 L3.48 2.25 L3.84 2.19 L4.26 2.24 L4.73 2.40 L5.24 2.68 L5.73 2.99 L6.13 3.23 L6.46 3.40 L6.72 3.49 L6.92 3.47 L7.08 3.34 L7.21 3.09 L7.32 2.74 L7.43 2.28 L7.55 1.72 L7.72 1.16 L7.94 0.72 L8.20 0.38 L8.49 0.17 L8.80 0.10 L9.11 0.17 L9.40 0.38 L9.66 0.72 L9.88 1.16 L10.05 1.72 L10.17 2.28 L10.28 2.74 L10.39 3.09 L10.52 3.34 L10.68 3.47 L10.88 3.49 L11.14 3.40 L11.47 3.23 L11.87 2.99 L12.36 2.68 L12.87 2.40 L13.34 2.24 L13.76 2.19 L14.12 2.25 L14.39 2.41 L14.55 2.68 L14.61 3.04 L14.56 3.46 L14.40 3.93 L14.12 4.44 L13.81 4.93 L13.57 5.33 L13.40 5.66 L13.31 5.92 L13.33 6.12 L13.46 6.28 L13.71 6.41 L14.06 6.52 L14.52 6.63 L15.08 6.75 L15.64 6.92 L16.08 7.14 L16.42 7.40 L16.63 7.69Z"/><circle cx="8.8" cy="8" r="2.1"/></svg></div><div class="chk" style="top:538.00px"><svg width="26" height="26" viewBox="0 0 26 26" preserveAspectRatio="none"><circle cx="13" cy="13" r="13" fill="#00d125"/><path d="M5.5 13.2 L10.3 18 L20.6 8.700" fill="none" stroke="#fff" stroke-width="3" stroke-linecap="round" stroke-linejoin="round"/></svg></div><div class="row" style="top:530px"><div class="td" style="left:112.5px">68128</div><div class="td" style="left:195px">CS407453</div><div class="td" style="left:319.6px">SIV</div><div class="td" style="left:458px">Pedro Henrique Baeta Nogueira de Souza</div><div class="td" style="left:888px">31/07/2025</div><div class="td" style="left:1085.5px">0</div><div class="td" style="left:1183.3px">31-07-2025 13:56</div><div class="td" style="left:1377.3px">31/07/2025</div></div><div class="gear" style="top:538px;height:26px"><svg width="16" height="16" viewBox="0 0 16 16" fill="none" stroke="#fff" stroke-width="1.3" stroke-linejoin="round" style="overflow:visible"><path d="M16.70 8.00 L16.63 8.31 L16.42 8.60 L16.08 8.86 L15.64 9.08 L15.08 9.25 L14.52 9.37 L14.06 9.48 L13.71 9.59 L13.46 9.72 L13.33 9.88 L13.31 10.08 L13.40 10.34 L13.57 10.67 L13.81 11.07 L14.12 11.56 L14.40 12.07 L14.56 12.54 L14.61 12.96 L14.55 13.32 L14.39 13.59 L14.12 13.75 L13.76 13.81 L13.34 13.76 L12.87 13.60 L12.36 13.32 L11.87 13.01 L11.47 12.77 L11.14 12.60 L10.88 12.51 L10.68 12.53 L10.52 12.66 L10.39 12.91 L10.28 13.26 L10.17 13.72 L10.05 14.28 L9.88 14.84 L9.66 15.28 L9.40 15.62 L9.11 15.83 L8.80 15.90 L8.49 15.83 L8.20 15.62 L7.94 15.28 L7.72 14.84 L7.55 14.28 L7.43 13.72 L7.32 13.26 L7.21 12.91 L7.08 12.66 L6.92 12.53 L6.72 12.51 L6.46 12.60 L6.13 12.77 L5.73 13.01 L5.24 13.32 L4.73 13.60 L4.26 13.76 L3.84 13.81 L3.48 13.75 L3.21 13.59 L3.05 13.32 L2.99 12.96 L3.04 12.54 L3.20 12.07 L3.48 11.56 L3.79 11.07 L4.03 10.67 L4.20 10.34 L4.29 10.08 L4.27 9.88 L4.14 9.72 L3.89 9.59 L3.54 9.48 L3.08 9.37 L2.52 9.25 L1.96 9.08 L1.52 8.86 L1.18 8.60 L0.97 8.31 L0.90 8.00 L0.97 7.69 L1.18 7.40 L1.52 7.14 L1.96 6.92 L2.52 6.75 L3.08 6.63 L3.54 6.52 L3.89 6.41 L4.14 6.28 L4.27 6.12 L4.29 5.92 L4.20 5.66 L4.03 5.33 L3.79 4.93 L3.48 4.44 L3.20 3.93 L3.04 3.46 L2.99 3.04 L3.05 2.68 L3.21 2.41 L3.48 2.25 L3.84 2.19 L4.26 2.24 L4.73 2.40 L5.24 2.68 L5.73 2.99 L6.13 3.23 L6.46 3.40 L6.72 3.49 L6.92 3.47 L7.08 3.34 L7.21 3.09 L7.32 2.74 L7.43 2.28 L7.55 1.72 L7.72 1.16 L7.94 0.72 L8.20 0.38 L8.49 0.17 L8.80 0.10 L9.11 0.17 L9.40 0.38 L9.66 0.72 L9.88 1.16 L10.05 1.72 L10.17 2.28 L10.28 2.74 L10.39 3.09 L10.52 3.34 L10.68 3.47 L10.88 3.49 L11.14 3.40 L11.47 3.23 L11.87 2.99 L12.36 2.68 L12.87 2.40 L13.34 2.24 L13.76 2.19 L14.12 2.25 L14.39 2.41 L14.55 2.68 L14.61 3.04 L14.56 3.46 L14.40 3.93 L14.12 4.44 L13.81 4.93 L13.57 5.33 L13.40 5.66 L13.31 5.92 L13.33 6.12 L13.46 6.28 L13.71 6.41 L14.06 6.52 L14.52 6.63 L15.08 6.75 L15.64 6.92 L16.08 7.14 L16.42 7.40 L16.63 7.69Z"/><circle cx="8.8" cy="8" r="2.1"/></svg></div><div class="chk" style="top:580.75px"><svg width="26" height="25.4" viewBox="0 0 26 26" preserveAspectRatio="none"><circle cx="13" cy="13" r="13" fill="#00d125"/><path d="M5.5 13.2 L10.3 18 L20.6 8.700" fill="none" stroke="#fff" stroke-width="3" stroke-linecap="round" stroke-linejoin="round"/></svg></div><div class="row" style="top:573px"><div class="td" style="left:112.5px">68129</div><div class="td" style="left:195px">CS407453</div><div class="td" style="left:319.6px">SIV</div><div class="td" style="left:458px">Pedro Henrique Baeta Nogueira de Souza</div><div class="td" style="left:888px">31/07/2025</div><div class="td" style="left:1085.5px">0</div><div class="td" style="left:1183.3px">31-07-2025 13:56</div><div class="td" style="left:1377.3px">31/07/2025</div></div><div class="gear" style="top:580px;height:27px"><svg width="16" height="16" viewBox="0 0 16 16" fill="none" stroke="#fff" stroke-width="1.3" stroke-linejoin="round" style="overflow:visible"><path d="M16.70 8.00 L16.63 8.31 L16.42 8.60 L16.08 8.86 L15.64 9.08 L15.08 9.25 L14.52 9.37 L14.06 9.48 L13.71 9.59 L13.46 9.72 L13.33 9.88 L13.31 10.08 L13.40 10.34 L13.57 10.67 L13.81 11.07 L14.12 11.56 L14.40 12.07 L14.56 12.54 L14.61 12.96 L14.55 13.32 L14.39 13.59 L14.12 13.75 L13.76 13.81 L13.34 13.76 L12.87 13.60 L12.36 13.32 L11.87 13.01 L11.47 12.77 L11.14 12.60 L10.88 12.51 L10.68 12.53 L10.52 12.66 L10.39 12.91 L10.28 13.26 L10.17 13.72 L10.05 14.28 L9.88 14.84 L9.66 15.28 L9.40 15.62 L9.11 15.83 L8.80 15.90 L8.49 15.83 L8.20 15.62 L7.94 15.28 L7.72 14.84 L7.55 14.28 L7.43 13.72 L7.32 13.26 L7.21 12.91 L7.08 12.66 L6.92 12.53 L6.72 12.51 L6.46 12.60 L6.13 12.77 L5.73 13.01 L5.24 13.32 L4.73 13.60 L4.26 13.76 L3.84 13.81 L3.48 13.75 L3.21 13.59 L3.05 13.32 L2.99 12.96 L3.04 12.54 L3.20 12.07 L3.48 11.56 L3.79 11.07 L4.03 10.67 L4.20 10.34 L4.29 10.08 L4.27 9.88 L4.14 9.72 L3.89 9.59 L3.54 9.48 L3.08 9.37 L2.52 9.25 L1.96 9.08 L1.52 8.86 L1.18 8.60 L0.97 8.31 L0.90 8.00 L0.97 7.69 L1.18 7.40 L1.52 7.14 L1.96 6.92 L2.52 6.75 L3.08 6.63 L3.54 6.52 L3.89 6.41 L4.14 6.28 L4.27 6.12 L4.29 5.92 L4.20 5.66 L4.03 5.33 L3.79 4.93 L3.48 4.44 L3.20 3.93 L3.04 3.46 L2.99 3.04 L3.05 2.68 L3.21 2.41 L3.48 2.25 L3.84 2.19 L4.26 2.24 L4.73 2.40 L5.24 2.68 L5.73 2.99 L6.13 3.23 L6.46 3.40 L6.72 3.49 L6.92 3.47 L7.08 3.34 L7.21 3.09 L7.32 2.74 L7.43 2.28 L7.55 1.72 L7.72 1.16 L7.94 0.72 L8.20 0.38 L8.49 0.17 L8.80 0.10 L9.11 0.17 L9.40 0.38 L9.66 0.72 L9.88 1.16 L10.05 1.72 L10.17 2.28 L10.28 2.74 L10.39 3.09 L10.52 3.34 L10.68 3.47 L10.88 3.49 L11.14 3.40 L11.47 3.23 L11.87 2.99 L12.36 2.68 L12.87 2.40 L13.34 2.24 L13.76 2.19 L14.12 2.25 L14.39 2.41 L14.55 2.68 L14.61 3.04 L14.56 3.46 L14.40 3.93 L14.12 4.44 L13.81 4.93 L13.57 5.33 L13.40 5.66 L13.31 5.92 L13.33 6.12 L13.46 6.28 L13.71 6.41 L14.06 6.52 L14.52 6.63 L15.08 6.75 L15.64 6.92 L16.08 7.14 L16.42 7.40 L16.63 7.69Z"/><circle cx="8.8" cy="8" r="2.1"/></svg></div><div class="chk" style="top:622.80px"><svg width="26" height="26" viewBox="0 0 26 26" preserveAspectRatio="none"><circle cx="13" cy="13" r="13" fill="#00d125"/><path d="M5.5 13.2 L10.3 18 L20.6 8.700" fill="none" stroke="#fff" stroke-width="3" stroke-linecap="round" stroke-linejoin="round"/></svg></div><div class="row" style="top:615px"><div class="td" style="left:112.5px">68130</div><div class="td" style="left:195px">CS407453</div><div class="td" style="left:319.6px">SIV</div><div class="td" style="left:458px">Pedro Henrique Baeta Nogueira de Souza</div><div class="td" style="left:888px">31/07/2025</div><div class="td" style="left:1085.5px">0</div><div class="td" style="left:1183.3px">31-07-2025 13:56</div><div class="td" style="left:1377.3px">31/07/2025</div></div><div class="gear" style="top:623px;height:26px"><svg width="16" height="16" viewBox="0 0 16 16" fill="none" stroke="#fff" stroke-width="1.3" stroke-linejoin="round" style="overflow:visible"><path d="M16.70 8.00 L16.63 8.31 L16.42 8.60 L16.08 8.86 L15.64 9.08 L15.08 9.25 L14.52 9.37 L14.06 9.48 L13.71 9.59 L13.46 9.72 L13.33 9.88 L13.31 10.08 L13.40 10.34 L13.57 10.67 L13.81 11.07 L14.12 11.56 L14.40 12.07 L14.56 12.54 L14.61 12.96 L14.55 13.32 L14.39 13.59 L14.12 13.75 L13.76 13.81 L13.34 13.76 L12.87 13.60 L12.36 13.32 L11.87 13.01 L11.47 12.77 L11.14 12.60 L10.88 12.51 L10.68 12.53 L10.52 12.66 L10.39 12.91 L10.28 13.26 L10.17 13.72 L10.05 14.28 L9.88 14.84 L9.66 15.28 L9.40 15.62 L9.11 15.83 L8.80 15.90 L8.49 15.83 L8.20 15.62 L7.94 15.28 L7.72 14.84 L7.55 14.28 L7.43 13.72 L7.32 13.26 L7.21 12.91 L7.08 12.66 L6.92 12.53 L6.72 12.51 L6.46 12.60 L6.13 12.77 L5.73 13.01 L5.24 13.32 L4.73 13.60 L4.26 13.76 L3.84 13.81 L3.48 13.75 L3.21 13.59 L3.05 13.32 L2.99 12.96 L3.04 12.54 L3.20 12.07 L3.48 11.56 L3.79 11.07 L4.03 10.67 L4.20 10.34 L4.29 10.08 L4.27 9.88 L4.14 9.72 L3.89 9.59 L3.54 9.48 L3.08 9.37 L2.52 9.25 L1.96 9.08 L1.52 8.86 L1.18 8.60 L0.97 8.31 L0.90 8.00 L0.97 7.69 L1.18 7.40 L1.52 7.14 L1.96 6.92 L2.52 6.75 L3.08 6.63 L3.54 6.52 L3.89 6.41 L4.14 6.28 L4.27 6.12 L4.29 5.92 L4.20 5.66 L4.03 5.33 L3.79 4.93 L3.48 4.44 L3.20 3.93 L3.04 3.46 L2.99 3.04 L3.05 2.68 L3.21 2.41 L3.48 2.25 L3.84 2.19 L4.26 2.24 L4.73 2.40 L5.24 2.68 L5.73 2.99 L6.13 3.23 L6.46 3.40 L6.72 3.49 L6.92 3.47 L7.08 3.34 L7.21 3.09 L7.32 2.74 L7.43 2.28 L7.55 1.72 L7.72 1.16 L7.94 0.72 L8.20 0.38 L8.49 0.17 L8.80 0.10 L9.11 0.17 L9.40 0.38 L9.66 0.72 L9.88 1.16 L10.05 1.72 L10.17 2.28 L10.28 2.74 L10.39 3.09 L10.52 3.34 L10.68 3.47 L10.88 3.49 L11.14 3.40 L11.47 3.23 L11.87 2.99 L12.36 2.68 L12.87 2.40 L13.34 2.24 L13.76 2.19 L14.12 2.25 L14.39 2.41 L14.55 2.68 L14.61 3.04 L14.56 3.46 L14.40 3.93 L14.12 4.44 L13.81 4.93 L13.57 5.33 L13.40 5.66 L13.31 5.92 L13.33 6.12 L13.46 6.28 L13.71 6.41 L14.06 6.52 L14.52 6.63 L15.08 6.75 L15.64 6.92 L16.08 7.14 L16.42 7.40 L16.63 7.69Z"/><circle cx="8.8" cy="8" r="2.1"/></svg></div><div class="chk" style="top:665.55px"><svg width="26" height="25.4" viewBox="0 0 26 26" preserveAspectRatio="none"><circle cx="13" cy="13" r="13" fill="#00d125"/><path d="M5.5 13.2 L10.3 18 L20.6 8.700" fill="none" stroke="#fff" stroke-width="3" stroke-linecap="round" stroke-linejoin="round"/></svg></div><div class="row" style="top:657px"><div class="td" style="left:112.5px">68131</div><div class="td" style="left:195px">CS407453</div><div class="td" style="left:319.6px">SIV</div><div class="td" style="left:458px">Pedro Henrique Baeta Nogueira de Souza</div><div class="td" style="left:888px">31/07/2025</div><div class="td" style="left:1085.5px">0</div><div class="td" style="left:1183.3px">31-07-2025 13:56</div><div class="td" style="left:1377.3px">31/07/2025</div></div><div class="gear" style="top:665px;height:27px"><svg width="16" height="16" viewBox="0 0 16 16" fill="none" stroke="#fff" stroke-width="1.3" stroke-linejoin="round" style="overflow:visible"><path d="M16.70 8.00 L16.63 8.31 L16.42 8.60 L16.08 8.86 L15.64 9.08 L15.08 9.25 L14.52 9.37 L14.06 9.48 L13.71 9.59 L13.46 9.72 L13.33 9.88 L13.31 10.08 L13.40 10.34 L13.57 10.67 L13.81 11.07 L14.12 11.56 L14.40 12.07 L14.56 12.54 L14.61 12.96 L14.55 13.32 L14.39 13.59 L14.12 13.75 L13.76 13.81 L13.34 13.76 L12.87 13.60 L12.36 13.32 L11.87 13.01 L11.47 12.77 L11.14 12.60 L10.88 12.51 L10.68 12.53 L10.52 12.66 L10.39 12.91 L10.28 13.26 L10.17 13.72 L10.05 14.28 L9.88 14.84 L9.66 15.28 L9.40 15.62 L9.11 15.83 L8.80 15.90 L8.49 15.83 L8.20 15.62 L7.94 15.28 L7.72 14.84 L7.55 14.28 L7.43 13.72 L7.32 13.26 L7.21 12.91 L7.08 12.66 L6.92 12.53 L6.72 12.51 L6.46 12.60 L6.13 12.77 L5.73 13.01 L5.24 13.32 L4.73 13.60 L4.26 13.76 L3.84 13.81 L3.48 13.75 L3.21 13.59 L3.05 13.32 L2.99 12.96 L3.04 12.54 L3.20 12.07 L3.48 11.56 L3.79 11.07 L4.03 10.67 L4.20 10.34 L4.29 10.08 L4.27 9.88 L4.14 9.72 L3.89 9.59 L3.54 9.48 L3.08 9.37 L2.52 9.25 L1.96 9.08 L1.52 8.86 L1.18 8.60 L0.97 8.31 L0.90 8.00 L0.97 7.69 L1.18 7.40 L1.52 7.14 L1.96 6.92 L2.52 6.75 L3.08 6.63 L3.54 6.52 L3.89 6.41 L4.14 6.28 L4.27 6.12 L4.29 5.92 L4.20 5.66 L4.03 5.33 L3.79 4.93 L3.48 4.44 L3.20 3.93 L3.04 3.46 L2.99 3.04 L3.05 2.68 L3.21 2.41 L3.48 2.25 L3.84 2.19 L4.26 2.24 L4.73 2.40 L5.24 2.68 L5.73 2.99 L6.13 3.23 L6.46 3.40 L6.72 3.49 L6.92 3.47 L7.08 3.34 L7.21 3.09 L7.32 2.74 L7.43 2.28 L7.55 1.72 L7.72 1.16 L7.94 0.72 L8.20 0.38 L8.49 0.17 L8.80 0.10 L9.11 0.17 L9.40 0.38 L9.66 0.72 L9.88 1.16 L10.05 1.72 L10.17 2.28 L10.28 2.74 L10.39 3.09 L10.52 3.34 L10.68 3.47 L10.88 3.49 L11.14 3.40 L11.47 3.23 L11.87 2.99 L12.36 2.68 L12.87 2.40 L13.34 2.24 L13.76 2.19 L14.12 2.25 L14.39 2.41 L14.55 2.68 L14.61 3.04 L14.56 3.46 L14.40 3.93 L14.12 4.44 L13.81 4.93 L13.57 5.33 L13.40 5.66 L13.31 5.92 L13.33 6.12 L13.46 6.28 L13.71 6.41 L14.06 6.52 L14.52 6.63 L15.08 6.75 L15.64 6.92 L16.08 7.14 L16.42 7.40 L16.63 7.69Z"/><circle cx="8.8" cy="8" r="2.1"/></svg></div><div class="chk" style="top:707.60px"><svg width="26" height="26" viewBox="0 0 26 26" preserveAspectRatio="none"><circle cx="13" cy="13" r="13" fill="#00d125"/><path d="M5.5 13.2 L10.3 18 L20.6 8.700" fill="none" stroke="#fff" stroke-width="3" stroke-linecap="round" stroke-linejoin="round"/></svg></div><div class="row" style="top:700px"><div class="td" style="left:112.5px">68132</div><div class="td" style="left:195px">CS407453</div><div class="td" style="left:319.6px">SIV</div><div class="td" style="left:458px">Pedro Henrique Baeta Nogueira de Souza</div><div class="td" style="left:888px">31/07/2025</div><div class="td" style="left:1085.5px">0</div><div class="td" style="left:1183.3px">31-07-2025 13:56</div><div class="td" style="left:1377.3px">31/07/2025</div></div><div class="gear" style="top:708px;height:26px"><svg width="16" height="16" viewBox="0 0 16 16" fill="none" stroke="#fff" stroke-width="1.3" stroke-linejoin="round" style="overflow:visible"><path d="M16.70 8.00 L16.63 8.31 L16.42 8.60 L16.08 8.86 L15.64 9.08 L15.08 9.25 L14.52 9.37 L14.06 9.48 L13.71 9.59 L13.46 9.72 L13.33 9.88 L13.31 10.08 L13.40 10.34 L13.57 10.67 L13.81 11.07 L14.12 11.56 L14.40 12.07 L14.56 12.54 L14.61 12.96 L14.55 13.32 L14.39 13.59 L14.12 13.75 L13.76 13.81 L13.34 13.76 L12.87 13.60 L12.36 13.32 L11.87 13.01 L11.47 12.77 L11.14 12.60 L10.88 12.51 L10.68 12.53 L10.52 12.66 L10.39 12.91 L10.28 13.26 L10.17 13.72 L10.05 14.28 L9.88 14.84 L9.66 15.28 L9.40 15.62 L9.11 15.83 L8.80 15.90 L8.49 15.83 L8.20 15.62 L7.94 15.28 L7.72 14.84 L7.55 14.28 L7.43 13.72 L7.32 13.26 L7.21 12.91 L7.08 12.66 L6.92 12.53 L6.72 12.51 L6.46 12.60 L6.13 12.77 L5.73 13.01 L5.24 13.32 L4.73 13.60 L4.26 13.76 L3.84 13.81 L3.48 13.75 L3.21 13.59 L3.05 13.32 L2.99 12.96 L3.04 12.54 L3.20 12.07 L3.48 11.56 L3.79 11.07 L4.03 10.67 L4.20 10.34 L4.29 10.08 L4.27 9.88 L4.14 9.72 L3.89 9.59 L3.54 9.48 L3.08 9.37 L2.52 9.25 L1.96 9.08 L1.52 8.86 L1.18 8.60 L0.97 8.31 L0.90 8.00 L0.97 7.69 L1.18 7.40 L1.52 7.14 L1.96 6.92 L2.52 6.75 L3.08 6.63 L3.54 6.52 L3.89 6.41 L4.14 6.28 L4.27 6.12 L4.29 5.92 L4.20 5.66 L4.03 5.33 L3.79 4.93 L3.48 4.44 L3.20 3.93 L3.04 3.46 L2.99 3.04 L3.05 2.68 L3.21 2.41 L3.48 2.25 L3.84 2.19 L4.26 2.24 L4.73 2.40 L5.24 2.68 L5.73 2.99 L6.13 3.23 L6.46 3.40 L6.72 3.49 L6.92 3.47 L7.08 3.34 L7.21 3.09 L7.32 2.74 L7.43 2.28 L7.55 1.72 L7.72 1.16 L7.94 0.72 L8.20 0.38 L8.49 0.17 L8.80 0.10 L9.11 0.17 L9.40 0.38 L9.66 0.72 L9.88 1.16 L10.05 1.72 L10.17 2.28 L10.28 2.74 L10.39 3.09 L10.52 3.34 L10.68 3.47 L10.88 3.49 L11.14 3.40 L11.47 3.23 L11.87 2.99 L12.36 2.68 L12.87 2.40 L13.34 2.24 L13.76 2.19 L14.12 2.25 L14.39 2.41 L14.55 2.68 L14.61 3.04 L14.56 3.46 L14.40 3.93 L14.12 4.44 L13.81 4.93 L13.57 5.33 L13.40 5.66 L13.31 5.92 L13.33 6.12 L13.46 6.28 L13.71 6.41 L14.06 6.52 L14.52 6.63 L15.08 6.75 L15.64 6.92 L16.08 7.14 L16.42 7.40 L16.63 7.69Z"/><circle cx="8.8" cy="8" r="2.1"/></svg></div>

<div id="pinfo" class="abs">Pagina: 1 de : 2 / Total Registros: 14</div>

<div class="pg" style="left:1329px"><svg width="16" height="16" viewBox="0 0 16 16" fill="none" stroke="#a7adb4" stroke-width="1.4" stroke-linecap="round" stroke-linejoin="round" style="vertical-align:-3px"><path d="M7.5 4L3.5 8l4 4M13 4L9 8l4 4"/></svg></div>
<div class="pg" style="left:1366px"><svg width="16" height="16" viewBox="0 0 16 16" fill="none" stroke="#a7adb4" stroke-width="1.4" stroke-linecap="round" stroke-linejoin="round" style="vertical-align:-3px"><path d="M10 4L6 8l4 4"/></svg></div>
<div class="pg" style="left:1404px;background:#e3f2fd;color:#495057;border-left:1px solid #1e88e5">1</div>
<div class="pg" style="left:1442px">2</div>
<div class="pg" style="left:1480px"><svg width="16" height="16" viewBox="0 0 16 16" fill="none" stroke="#6c757d" stroke-width="1.4" stroke-linecap="round" stroke-linejoin="round" style="vertical-align:-3px"><path d="M6 4l4 4-4 4"/></svg></div>
<div class="pg" style="left:1517px"><svg width="16" height="16" viewBox="0 0 16 16" fill="none" stroke="#6c757d" stroke-width="1.4" stroke-linecap="round" stroke-linejoin="round" style="vertical-align:-3px"><path d="M3 4l4 4-4 4M8.5 4l4 4-4 4"/></svg></div>
<div id="dd" class="abs"><div class="in abs">10</div><svg class="abs" style="left:44px;top:12px" width="14" height="12" viewBox="0 0 14 12" fill="none" stroke="#495057" stroke-width="1.4" stroke-linecap="round" stroke-linejoin="round"><path d="M1 3l6 6 6-6"/></svg></div>

<div id="wstrip" class="abs"></div>
<div id="footer" class="abs"><span class="abs" style="left:19px;top:0">© 2025</span><span class="abs" style="right:5.5px;top:0">Distribuído por <span style="color:#002868">Rumo</span></span></div>
</body>
</html>
